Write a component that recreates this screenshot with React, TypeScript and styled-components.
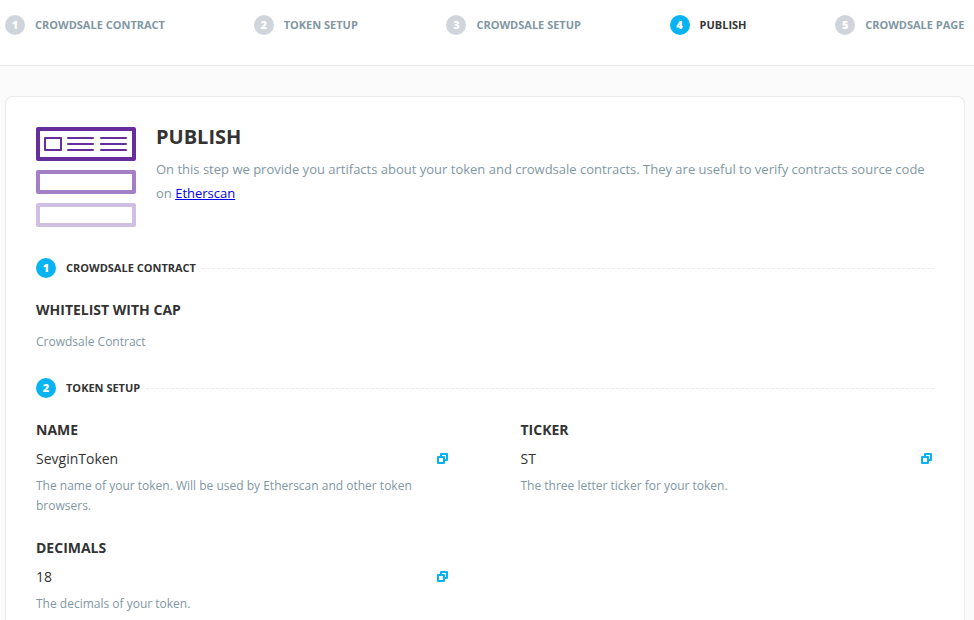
import React from "react";
import styled, { createGlobalStyle } from "styled-components";

const Global = createGlobalStyle`
  * { box-sizing: border-box; }
  body { margin: 0; background: #fbfbfb; font-family: "Open Sans", sans-serif; }
  h1, h2, h3, p { margin: 0; }
`;

const Page = styled.div`
  height: 100vh;
  display: flex;
  flex-direction: column;
  overflow: hidden;
`;

const Header = styled.nav`
  flex: none;
  display: flex;
  justify-content: space-between;
  height: 66px;
  padding: 15px 9.5px 0 5px;
  background: #fff;
  border-bottom: 1px solid #eaeaea;
`;

const Step = styled.div<{ $active?: boolean }>`
  display: flex;
  gap: 10px;
  height: 20px;
  font-size: 11px;
  font-weight: 700;
  line-height: 19px;
  white-space: nowrap;
  color: ${(p) => (p.$active ? "#333" : "#8197a2")};
`;

const Bullet = styled.span<{ $active?: boolean }>`
  flex: none;
  width: 20px;
  height: 20px;
  border-radius: 50%;
  background: ${(p) => (p.$active ? "#08b3f2" : "#cfd5db")};
  color: #fff;
  font-size: 11px;
  font-weight: 800;
  line-height: 20px;
  text-align: center;
`;

const Card = styled.main`
  flex: 1;
  min-height: 0;
  margin: 30px 9px 0 5px;
  padding: 30px 30px 0;
  background: #fff;
  border: 1px solid #eaeaea;
  border-bottom: 0;
  border-radius: 8px 8px 0 0;
`;

const Intro = styled.header`
  display: flex;
  gap: 20px;
  height: 100px;
`;

const Title = styled.h1`
  font-size: 20px;
  line-height: 20px;
  font-weight: 700;
  color: #333;
`;

const Lead = styled.p`
  margin-top: 10px;
  font-size: 13px;
  line-height: 24px;
  color: #8197a2;
`;

const Section = styled.div<{ $top: number }>`
  display: flex;
  gap: 10px;
  height: 20px;
  margin-top: ${(p) => p.$top}px;
  font-size: 11px;
  font-weight: 700;
  line-height: 19px;
  color: #333;
`;

const Rule = styled.span`
  flex: 1;
  align-self: center;
  margin-left: -4px;
  height: 1px;
  background: repeating-linear-gradient(90deg, #eaeaea 0 3px, transparent 3px 5px);
`;

const Grid = styled.div`
  display: grid;
  grid-template-columns: 412px 411.5px;
  column-gap: 72.5px;
  row-gap: 22px;
  margin-top: 22px;
`;

const Label = styled.h3`
  font-size: 14px;
  line-height: 20px;
  font-weight: 700;
  color: #333;
`;

const Value = styled.div`
  display: flex;
  align-items: center;
  justify-content: space-between;
  height: 20px;
  margin-top: 9px;
  font-size: 14px;
  line-height: 18px;
  color: #333;
`;

const Hint = styled.p<{ $gap?: number }>`
  margin-top: ${(p) => p.$gap ?? 7}px;
  font-size: 12px;
  line-height: 20px;
  color: #8197a2;
`;

const Artwork = styled.svg`
  flex: none;
`;

const CopyMark = styled.svg`
  flex: none;
  margin-bottom: 1px;
`;

const PublishIcon = () => (
  <Artwork width="100" height="100" fill="none" strokeLinejoin="round">
    <rect x="2" y="2" width="96" height="30" stroke="#662d9d" strokeWidth="4" />
    <rect x="9" y="11" width="16" height="12" stroke="#662d9d" strokeWidth="2" />
    <path
      d="M32 11h25M32 17h25M32 23h25M65 11h25M65 17h25M65 23h25"
      stroke="#662d9d"
      strokeWidth="2"
      strokeLinecap="round"
    />
    <rect x="2" y="45" width="96" height="20" stroke="#a37fc5" strokeWidth="4" />
    <rect x="2" y="78" width="96" height="20" stroke="#cfbfe2" strokeWidth="4" />
  </Artwork>
);

const CopyIcon = () => (
  <CopyMark width="11" height="11" fill="none" stroke="#08b3f2" strokeWidth="2" strokeLinejoin="round">
    <path d="M1 4h6v6H1zM4 4V1h6v6H7" />
  </CopyMark>
);

const steps = ["CROWDSALE CONTRACT", "TOKEN SETUP", "CROWDSALE SETUP", "PUBLISH", "CROWDSALE PAGE"];
const fields = [
  { label: "NAME", value: "SevginToken", hint: "The name of your token. Will be used by Etherscan and other token browsers." },
  { label: "TICKER", value: "ST", hint: "The three letter ticker for your token." },
  { label: "DECIMALS", value: "18", hint: "The decimals of your token." },
];

export default function App() {
  return (
    <Page>
      <Global />
      <Header>
        {steps.map((name, i) => (
          <Step key={name} $active={i === 3}>
            <Bullet $active={i === 3}>{i + 1}</Bullet>
            {name}
          </Step>
        ))}
      </Header>
      <Card>
        <Intro>
          <PublishIcon />
          <div>
            <Title>PUBLISH</Title>
            <Lead>
              On this step we provide you artifacts about your token and crowdsale contracts. They are useful to verify
              contracts source code on <a href="#">Etherscan</a>
            </Lead>
          </div>
        </Intro>
        <Section $top={31}><Bullet $active>1</Bullet>CROWDSALE CONTRACT<Rule /></Section>
        <Grid>
          <div>
            <Label>WHITELIST WITH CAP</Label>
            <Hint $gap={12}>Crowdsale Contract</Hint>
          </div>
        </Grid>
        <Section $top={26}><Bullet $active>2</Bullet>TOKEN SETUP<Rule /></Section>
        <Grid>
          {fields.map((f) => (
            <div key={f.label}>
              <Label>{f.label}</Label>
              <Value>{f.value}<CopyIcon /></Value>
              <Hint>{f.hint}</Hint>
            </div>
          ))}
        </Grid>
      </Card>
    </Page>
  );
}
